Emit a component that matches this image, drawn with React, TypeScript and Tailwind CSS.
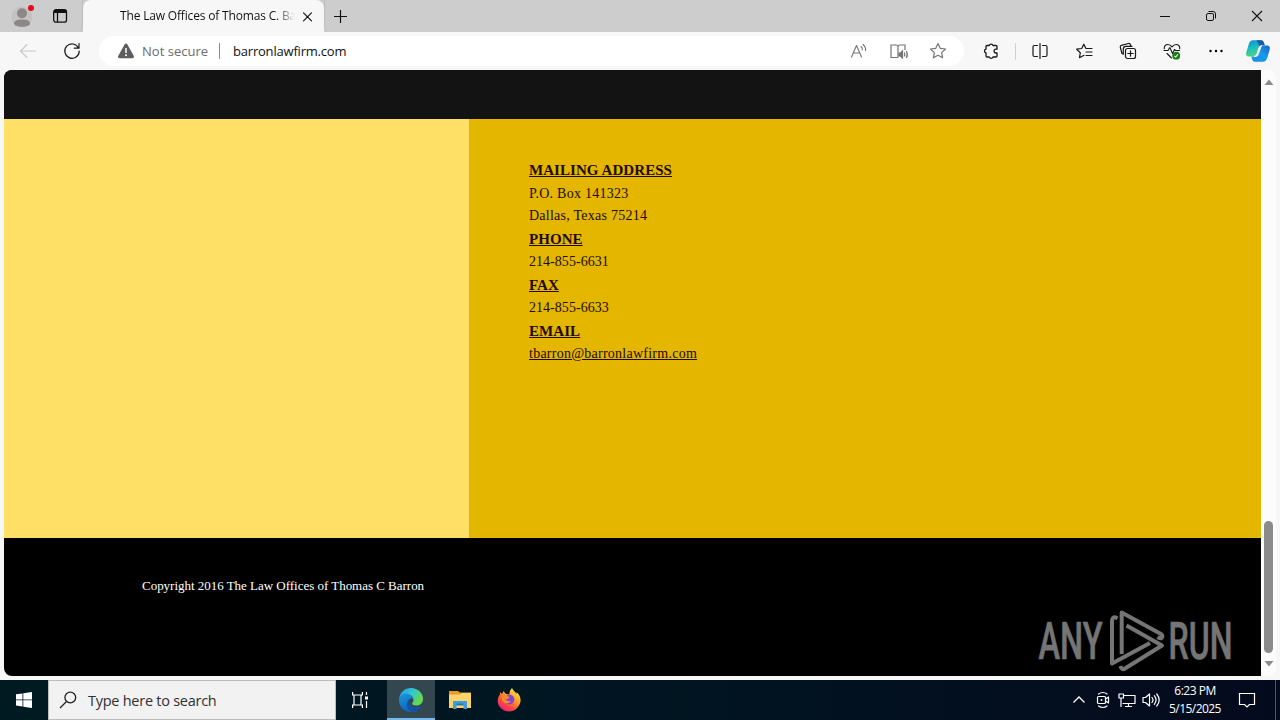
import type { ReactNode } from "react";

type IconProps = { children: ReactNode; size?: number; className?: string; sw?: number };

function Icon({ children, size = 18, className = "", sw = 1.1 }: IconProps) {
  return (
    <svg width={size} height={size} viewBox="0 0 18 18" fill="none" stroke="currentColor" strokeWidth={sw} strokeLinecap="round" strokeLinejoin="round" className={`block shrink-0 ${className}`}>
      {children}
    </svg>
  );
}

function Cell({ w, children }: { w: string; children: ReactNode }) {
  return <div className={`flex h-full shrink-0 items-center justify-center ${w}`}>{children}</div>;
}

function TitleBar() {
  return (
    <div className="flex h-8 shrink-0 bg-[#cdcdcd] text-[#111]">
      <div className="flex w-[83px] items-center rounded-br-md border-r border-[#bdbdbd]">
        <svg width="28" height="28" viewBox="0 0 28 28" className="ml-2 block">
          <circle cx="14" cy="15" r="10.5" fill="#c4c2c1" />
          <circle cx="14" cy="11.200" r="5" fill="#8b8887" />
          <path d="M6 21.500C6 18.500 9 17.400 14 17.400s8 1.100 8 4.100c0 2-3.500 3.200-8 3.200s-8-1.200-8-3.200z" fill="#8b8887" />
          <circle cx="23" cy="6" r="3" fill="#e00b1c" />
        </svg>
        <svg width="16" height="16" viewBox="0 0 16 16" className="ml-4 block" fill="none" stroke="#111" strokeWidth="1.300">
          <rect x="1.700" y="1.700" width="12.800" height="12.400" rx="2.200" />
          <path d="M2 3.500h12" strokeWidth="3" />
          <path d="M5.500 4v10" />
        </svg>
      </div>
      <div className="flex w-[241px] items-center rounded-t-lg bg-[#f7f7f7]">
        <div className="ml-[37px] w-[175px] overflow-hidden whitespace-nowrap bg-linear-to-r from-[#111] from-88% to-[#f7f7f7] bg-clip-text font-['Open_Sans','Noto_Sans',sans-serif] text-[12px] leading-4 tracking-[-0.17px] text-transparent">
          The Law Offices of Thomas C. Barron
        </div>
        <Icon size={13} sw={1.6} className="ml-[6px]"><path d="M3.500 4l11 11M14.500 4l-11 11" /></Icon>
      </div>
      <div className="flex w-8 items-center justify-center rounded-bl-md border-l border-[#bdbdbd]">
        <svg width="14" height="14" viewBox="0 0 14 14" stroke="#111" strokeWidth="1.200" className="-ml-px -mt-px"><path d="M7.500 1v13M1 7.500h13" /></svg>
      </div>
      <div className="ml-auto flex">
        <Cell w="w-[46px]"><svg width="10" height="10" stroke="#111"><path d="M0 5.500h10" /></svg></Cell>
        <Cell w="w-[46px]">
          <svg width="12" height="12" viewBox="0 0 12 12" fill="none" stroke="#111"><rect x="1.500" y="3.500" width="7" height="7" rx="1.500" /><path d="M3.500 1.500h4.500a2.500 2.500 0 0 1 2.500 2.500v4.500" /></svg>
        </Cell>
        <Cell w="w-[46px]"><svg width="12" height="12" viewBox="0 0 12 12" stroke="#111" strokeWidth="1.100"><path d="M1 1l10 10M11 1L1 11" /></svg></Cell>
      </div>
    </div>
  );
}

function Copilot() {
  return (
    <svg width="26" height="24" viewBox="0 0 26 24" className="block">
      <defs>
        <linearGradient id="cpa" x1="0" y1="0" x2="0.300" y2="1"><stop offset="0" stopColor="#0b8bd8" /><stop offset=".55" stopColor="#20bfc0" /><stop offset="1" stopColor="#51d27a" /></linearGradient>
        <linearGradient id="cpb" x1="1" y1="0" x2="0" y2="1"><stop offset="0" stopColor="#2064c8" /><stop offset=".5" stopColor="#159bea" /><stop offset="1" stopColor="#188ce8" /></linearGradient>
      </defs>
      <path d="M16 1.300c2 0 2.600 1.500 3.100 3l.6 2h-3c-2 0-2.700 1.500-3.300 3.400l-1.500 4.600c-.6 1.900-1.400 3.300-3.300 3.300H4c-2.800 0-3.300-2.200-2.600-4.700l2.400-7.800C4.500 2.800 5.900 1.300 8 1.300z" fill="url(#cpa)" />
      <path d="M10 22.700c-2 0-2.600-1.500-3.100-3l-.5-2.100H9c2 0 2.700-1.400 3.300-3.300l1.500-4.600c.6-1.900 1.400-3.300 3.300-3.300H22c2.800 0 3.300 2.200 2.600 4.600l-2.400 7.900c-.7 2.300-2.100 3.800-4.200 3.800z" fill="url(#cpb)" />
      <path d="M11.500 1.300H16c2 0 2.600 1.500 3.100 3l.6 2h-3c-1 0-1.600.3-2.100.9z" fill="#1758aa" />
      <path d="M17 6.500q-2.500 0-3.300 3.200l-1.500 4.600q-.8 3.200-3.200 3.300 2.600.2 3.800-1l3.200-8.500q.4-1.200 1-1.600z" fill="#f7f7f7" stroke="#f7f7f7" strokeWidth=".8" />
    </svg>
  );
}

const starPath = "M9 1.500l2.250 4.800 5.250.7-3.850 3.600.95 5.250L9 13.300l-4.600 2.550.95-5.250L1.500 7l5.250-.7z";

function Toolbar() {
  return (
    <div className="flex h-[38px] shrink-0 items-center bg-[#f7f7f7] text-[#191919]">
      <div className="flex w-[50px] justify-center pl-[6px] text-[#c8c8c8]"><Icon sw={1.1}><path d="M1.500 9h15M8 2.500L1.500 9 8 15.500" /></Icon></div>
      <div className="flex w-[49px] pl-[13px]"><Icon sw={1.2}><path d="M15.500 6A7.200 7.200 0 1 0 16.200 9M16 1.500v4.700h-4.700" /></Icon></div>
      <div className="flex h-[30px] w-[865px] items-center rounded-full bg-white font-['Open_Sans','Noto_Sans',sans-serif] text-[13px] leading-[18px]">
        <svg width="18" height="16" viewBox="0 0 18 16" className="ml-[18px] block"><path d="M7.700 1.200a1.500 1.500 0 0 1 2.600 0l6.500 11.900c.5 1-.2 2.100-1.300 2.100h-13c-1.100 0-1.800-1.100-1.300-2.100z" fill="#5d5d5d" /><path d="M9 5v5" stroke="#fff" strokeWidth="1.500" /><circle cx="9" cy="12.300" r="1" fill="#fff" /></svg>
        <span className="ml-[7px] w-[66px] whitespace-nowrap tracking-[0.02px] text-[#6b6b6b]">Not secure</span>
        <span className="ml-[11px] h-4 w-px bg-[#8c8c8c]" />
        <span className="ml-[13px] whitespace-nowrap tracking-[-0.2px] text-[#111]">barronlawfirm.com</span>
        <div className="ml-auto flex items-center pr-[7px] text-[#757575]">
          <Cell w="w-10"><Icon><path d="M1.500 15L6.500 3.500 11.500 15M3.300 11h6.400M11 4.500q1.600 1.300 1.300 3.500M13 2.500q3 2.500 2.500 6" /></Icon></Cell>
          <Cell w="w-10">
            <svg width="20" height="18" viewBox="0 0 20 18" fill="none" stroke="currentColor" strokeWidth="1.200"><path d="M9 15.500H2V3h5.500Q9 3 9 5v10.500M9 5q0-2 1.500-2H16v5" /><path d="M10 11.200h1.300L13.500 9v7l-2.200-2H10z" fill="currentColor" /><path d="M15.300 10.500q1 2 0 4M17.300 9q2 3.500 0 7" /></svg>
          </Cell>
          <Cell w="w-[38px]"><Icon sw={1.2}><path d={starPath} /></Icon></Cell>
        </div>
      </div>
      <div className="flex h-full w-[54px] items-center pl-[18px]">
        <Icon sw={1.3}><path d="M5 3.500h2.200a2 2 0 0 1 3.800 0h3a1 1 0 0 1 1 1v2.700h-1a1.900 1.900 0 0 0 0 3.800h1v3a1 1 0 0 1-1 1h-3a2 2 0 0 1-3.800 0H5a1 1 0 0 1-1-1V11a1.950 1.950 0 0 1 0-3.800V4.500a1 1 0 0 1 1-1z" /></Icon>
        <span className="ml-auto mr-[2px] h-[17px] w-px bg-[#d0d0d0]" />
      </div>
      <Cell w="w-[44px]"><Icon sw={1.200}><path d="M6.500 3.500H3.500a1.500 1.500 0 0 0-1.500 1.500v8a1.500 1.500 0 0 0 1.500 1.500h3M11.500 3.500h3A1.500 1.500 0 0 1 16 5v8a1.500 1.500 0 0 1-1.500 1.500h-3M9 1.500v15" /></Icon></Cell>
      <Cell w="w-[44px]"><Icon sw={1.200}><path d="M10.500 5.800L8.800 2.200 6.700 6.500l-5 .7 3.600 3.500-.8 5L9 13.300M8.800 2.200l2.100 4.300h6.100M11 10h6M11 13.500h6" /></Icon></Cell>
      <Cell w="w-[44px]"><Icon sw={1.200}><rect x="6.500" y="6.500" width="10" height="10" rx="2" /><path d="M4.300 12.200L3 11.500 1.300 5.300Q1 3.800 2.400 3.300L9.500 1.500q1.500-.2 2 1.200l.3 1.300M4.300 12.200V7Q4.300 4.300 7 4.300h6M11.500 8.800v5.400M8.800 11.500h5.400" /></Icon></Cell>
      <Cell w="w-[44px]">
        <Icon sw={1.100}><path d="M1.300 6.800C.9 4.300 2.600 2.500 4.800 2.500c2 0 3.200 1 4.200 2.300 1-1.300 2.200-2.300 4.200-2.300 2.200 0 3.900 1.800 3.500 4.300M1 8.500h4l1.800-3 2.700 6 2-4 1 1h4M4 11.500l4.500 4.500" /><circle cx="13.200" cy="13.700" r="3.900" fill="#14800f" stroke="none" /><path d="M11.700 14.300l1 .8 2-2.600" stroke="#d7f4cf" /></Icon>
      </Cell>
      <Cell w="w-[44px]"><svg width="16" height="4"><circle cx="2.500" cy="2" r="1.200" /><circle cx="8" cy="2" r="1.200" /><circle cx="13.500" cy="2" r="1.200" /></svg></Cell>
      <Cell w="w-[40px]"><Copilot /></Cell>
    </div>
  );
}

const contacts = [
  { title: "MAILING ADDRESS", lines: ["P.O. Box 141323", "Dallas, Texas 75214"] },
  { title: "PHONE", lines: ["214-855-6631"] },
  { title: "FAX", lines: ["214-855-6633"] },
];

function Page() {
  return (
    <div className="flex w-[1257px] flex-col overflow-hidden rounded-l-lg bg-black font-['Liberation_Serif',serif]">
      <div className="h-[49px] bg-[#131313]" />
      <div className="flex h-[419px]">
        <div className="w-[465px] bg-[#ffe066]" />
        <div className="flex-1 bg-[#e5b600] pl-[60px] pt-[40px] text-[#210b00]">
          {contacts.map((c) => (
            <div key={c.title}>
              <h2 className="h-[23px] text-[15px] font-bold leading-[23px] tracking-[0.06px] underline underline-offset-1">{c.title}</h2>
              {c.lines.map((l, i) => (
                <p key={l} className={`h-[23px] text-[14px] ${i || c.lines.length === 1 ? "leading-[21px]" : "leading-[23px]"} ${c.lines.length > 1 ? "tracking-[0.250px]" : "tracking-[0.040px]"}`}>{l}</p>
              ))}
            </div>
          ))}
          <h2 className="h-[23px] text-[15px] font-bold leading-[23px] tracking-[0.06px] underline underline-offset-1">EMAIL</h2>
          <p className="text-[14px] leading-[21px] tracking-[0.25px] underline underline-offset-1">tbarron@barronlawfirm.com</p>
        </div>
      </div>
      <div className="flex flex-1 pl-[138px] pt-[39px]">
        <p className="w-[500px] text-[13px] leading-[18px] tracking-[-0.02px] text-white">Copyright 2016 The Law Offices of Thomas C Barron</p>
        <svg width="208" height="68" viewBox="0 0 208 68" className="ml-auto mr-[18px] mt-[28px] block" fill="none" stroke="#757575">
          <g fill="#757575" strokeWidth=".7" fontFamily="Roboto, sans-serif" fontSize="52" fontWeight="500">
            <text x="3.500" y="54.300" textLength="64" lengthAdjust="spacingAndGlyphs">ANY</text>
            <text x="133.500" y="54.300" textLength="64" lengthAdjust="spacingAndGlyphs">RUN</text>
          </g>
          <g strokeWidth="4" strokeLinejoin="round">
            <path d="M86.700 49V7.500L126 29q2.500 2 .5 4-1 1-4-1" />
            <path d="M82.500 13.500Q77 10 77 17v41.500L115 38" />
            <path d="M91.500 20.500l35.500 20L90 63.500q-3.500 2-4.500-2.500" />
          </g>
        </svg>
      </div>
    </div>
  );
}

function ScrollBar() {
  return (
    <div className="flex w-[15px] flex-col items-center rounded-r-lg bg-[#fcfcfc]">
      <svg width="10" height="6" viewBox="0 0 10 6" className="mt-[9px] block"><path d="M5 .5L9.500 6H.5z" fill="#8b8b8b" /></svg>
      <div className="mt-[436px] h-[132px] w-[9px] rounded-full bg-[#8b8b8b]" />
      <svg width="10" height="6" viewBox="0 0 10 6" className="mt-[8px] block"><path d="M5 5.500L.5 0h9z" fill="#8b8b8b" /></svg>
    </div>
  );
}

function Taskbar() {
  return (
    <div className="flex h-10 shrink-0 bg-linear-to-r from-[#001a22] via-[#001521] to-[#040a1d] font-['Open_Sans','Noto_Sans',sans-serif] text-white">
      <Cell w="w-12"><svg width="16" height="16" viewBox="0 0 16 16" fill="#fff"><path d="M0 2.300l6.500-.9v6.100H0zM7.300 1.300L16 0v7.500H7.300zM0 8.300h6.500v6.200L0 13.600zM7.300 8.300H16V16l-8.700-1.300z" /></svg></Cell>
      <div className="flex w-[288px] items-center border border-[#bbb] bg-[#f2f2f2] text-[#303030]">
        <svg width="18" height="18" viewBox="0 0 18 18" fill="none" stroke="#202020" strokeWidth="1.300" className="ml-[10px] block"><circle cx="11.300" cy="6.500" r="5.400" /><path d="M7.500 10.500L1 17" /></svg>
        <span className="ml-[11px] mt-[2px] whitespace-nowrap text-[14.500px] leading-5 tracking-[-0.26px]">Type here to search</span>
      </div>
      <div className="flex w-[51px] items-center pl-4">
        <svg width="17" height="16" viewBox="0 0 17 16" fill="none" stroke="#fff" strokeWidth="1.200"><path d="M.6 0v3h9.800V0M.6 16v-3h9.800v3M2 3v10M9 3v10M14.500 0v3M14.500 9v7" /><path d="M13 4.500h3v3h-3z" fill="#fff" stroke="none" /></svg>
      </div>
      <div className="flex w-12 items-center justify-center border-b-2 border-[#76b9ed] bg-[#34474f]">
        <svg width="26" height="26" viewBox="0 0 26 26" className="mt-px block">
          <defs>
            <linearGradient id="ea" x1="0" y1="0" x2="1" y2=".5"><stop offset="0" stopColor="#1b9de2" /><stop offset=".5" stopColor="#32c5d4" /><stop offset="1" stopColor="#65d94b" /></linearGradient>
            <linearGradient id="eb" x1="0" y1="0" x2=".4" y2="1"><stop offset="0" stopColor="#1b97df" /><stop offset="1" stopColor="#0c66bd" /></linearGradient>
          </defs>
          <path d="M1.300 11C2.300 5 7 1 13 1c7 0 12 5 12 11 0 4-3 6.500-6.500 6.500-3 0-4.500-1-4.500-2 0-.7 1.500-1.300 1.500-3.500 0-3-3-5-6.500-5S2.500 9 1.300 11z" fill="url(#ea)" />
          <path d="M1 13c0-4 3.500-6.500 7-6.500s7.500 2.500 7.500 6c-1-1-2-1.500-3-1-2 1-3 3-2.500 6 .7 4 5 6.500 8 6-1.500 1-3.200 1.500-5 1.500C6 25 1 20 1 13z" fill="url(#eb)" />
          <path d="M11.500 12c-1.500 3 .5 7.500 6 8 2.500.2 4.500-.6 6-1.500.7-.3.800.3.500.8C22 22.500 19 25 14.500 25 9 24 6.500 16 11.500 12z" fill="#15529c" />
        </svg>
      </div>
      <Cell w="w-[49px]">
        <svg width="22" height="20" viewBox="0 0 22 20"><path d="M0 1h9l2 1.500h11V17H0z" fill="#e99b2a" /><path d="M0 4.500h11l2-1.500h9v15H0z" fill="#f9d36b" /><path d="M4 19v-7q0-1 1-1h12q1 0 1 1v7h-3.500v-4h-7v4z" fill="#3e9bdc" /><path d="M7.500 13.500h7v2h-7z" fill="#1c78bd" /></svg>
      </Cell>
      <Cell w="w-[49px]">
        <svg width="24" height="24" viewBox="0 0 24 24">
          <defs><linearGradient id="ff" x1=".85" y1="0" x2=".15" y2="1"><stop offset="0" stopColor="#fff44f" /><stop offset=".4" stopColor="#ff9a22" /><stop offset=".7" stopColor="#ff4646" /><stop offset="1" stopColor="#e31587" /></linearGradient></defs>
          <path d="M15 0c1 2.500 3.500 4 4.500 6 .3-.7 0-2 0-2 3 2.500 4.500 6 4 9.500C22.300 19.500 17.500 23.500 12 23.500S.7 19 .7 13c0-3 1-5 2.300-6.500V4l2 2L6.500 3l2.500 3c1.500-.2 2.500 0 3.500.5-.3-2.500 1-5 2.500-6.500z" fill="url(#ff)" />
          <circle cx="12.500" cy="11.500" r="4.800" fill="#8445d5" />
          <path d="M5 7.500c3-1 5-.5 7.500 2-1 1.500-3 1-4 2.500 2 .5 3 2 5.500 1-2 4-9 2.500-9-2z" fill="#ff8b23" />
        </svg>
      </Cell>
      <div className="ml-auto flex">
        <Cell w="w-6"><svg width="14" height="14" fill="none" stroke="#fff" strokeWidth="1.300"><path d="M1.500 9.500L7 4l5.500 5.500" /></svg></Cell>
        <Cell w="w-6"><Icon sw={1.200}><rect x="3.500" y="5.500" width="8" height="7" rx="1" /><path d="M11.500 8l3-2v6l-3-2M4.500 3Q9 0 13 3M4.500 15q4.500 3 8.500 0" /><circle cx="7.500" cy="9" r=".4" /></Icon></Cell>
        <Cell w="w-6"><Icon sw={1.200}><path d="M6 4.500h11v8H5M10.500 12.500v3M7.500 15.500h6M1 3h4.500v4H1zM3 7v8.500" /></Icon></Cell>
        <Cell w="w-6"><Icon sw={1.200}><path d="M1 6.500h2.500L7.500 3v12l-4-3.500H1zM10 6.500q2 2.500 0 5M12.300 4.700q3.500 4.300 0 8.600M14.700 3q5 6 0 12" /></Icon></Cell>
        <div className="flex w-16 flex-col items-center pt-[2px] text-[12px] leading-[18px] tracking-[-0.500px]"><span>6:23 PM</span><span className="tracking-[-0.550px]">5/15/2025</span></div>
        <Cell w="w-10"><svg width="18" height="18" viewBox="0 0 18 18" fill="none" stroke="#fff" strokeWidth="1.200"><path d="M1.500 2.500h15v11h-5L9 16l-2.500-2.500h-5z" /></svg></Cell>
        <div className="mr-1 w-[9px] border-r border-[#4b5260]" />
      </div>
    </div>
  );
}

export default function App() {
  return (
    <div className="flex h-[720px] w-[1280px] flex-col overflow-hidden bg-[#f7f7f7]">
      <TitleBar />
      <Toolbar />
      <div className="mb-1 flex min-h-0 flex-1 pl-1">
        <Page />
        <ScrollBar />
      </div>
      <Taskbar />
    </div>
  );
}
